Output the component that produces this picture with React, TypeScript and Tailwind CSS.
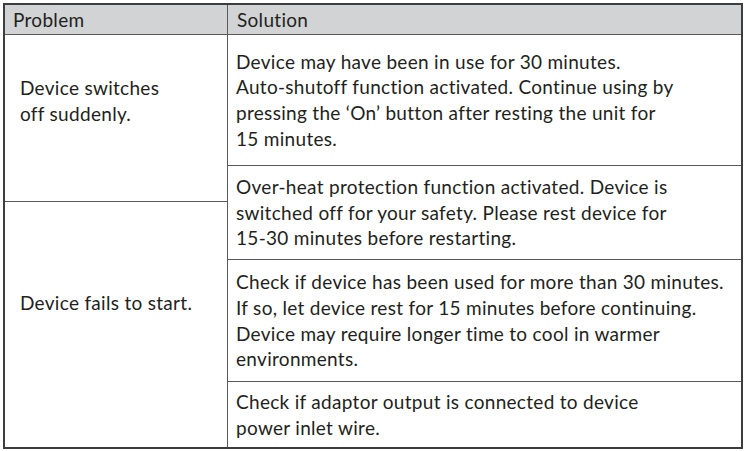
export default function App() {
    const font = { fontFamily: "Lato, 'Open Sans', sans-serif" };

    return (
        <div className="w-[746px] h-[451px] bg-white pl-[3px] pt-[3px]" style={font}>
            <div className="w-[740px] h-[446px] border-2 border-[#3d3d3d] flex flex-col text-[19px] tracking-[0.3px] leading-[25.7px] text-[#231f20]">
                {/* header */}
                <div className="h-[30px] flex bg-[#d1d3d4] border-b border-[#5a5a5a]">
                    <div className="w-[223px] border-r border-[#5a5a5a] pl-[8px] flex items-center">Problem</div>
                    <div className="flex-1 pl-[9px] flex items-center">Solution</div>
                </div>

                <div className="flex flex-1">
                    {/* problem column */}
                    <div className="w-[223px] border-r border-[#5a5a5a] flex flex-col">
                        <div className="h-[167px] border-b border-[#5a5a5a] pl-[15px] pt-[40px]">
                            Device switches
                            <br />
                            off suddenly.
                        </div>
                        <div className="flex-1 pl-[15px] pt-[88px]">Device fails to start.</div>
                    </div>

                    {/* solution column */}
                    <div className="flex-1 flex flex-col">
                        <div className="h-[131px] border-b border-[#5a5a5a] pl-[8px] flex items-center">
                            <p>
                                Device may have been in use for 30 minutes.
                                <br />
                                Auto-shutoff function activated. Continue using by
                                <br />
                                pressing the ‘On’ button after resting the unit for
                                <br />
                                15 minutes.
                            </p>
                        </div>
                        <div className="h-[94px] border-b border-[#5a5a5a] pl-[8px] flex items-center">
                            <p>
                                Over-heat protection function activated. Device is
                                <br />
                                switched off for your safety. Please rest device for
                                <br />
                                15-30 minutes before restarting.
                            </p>
                        </div>
                        <div className="h-[122px] border-b border-[#5a5a5a] pl-[8px] flex items-center">
                            <p>
                                Check if device has been used for more than 30 minutes.
                                <br />
                                If so, let device rest for 15 minutes before continuing.
                                <br />
                                Device may require longer time to cool in warmer
                                <br />
                                environments.
                            </p>
                        </div>
                        <div className="flex-1 pl-[8px] flex items-center">
                            <p>
                                Check if adaptor output is connected to device
                                <br />
                                power inlet wire.
                            </p>
                        </div>
                    </div>
                </div>
            </div>
        </div>
    );
}
